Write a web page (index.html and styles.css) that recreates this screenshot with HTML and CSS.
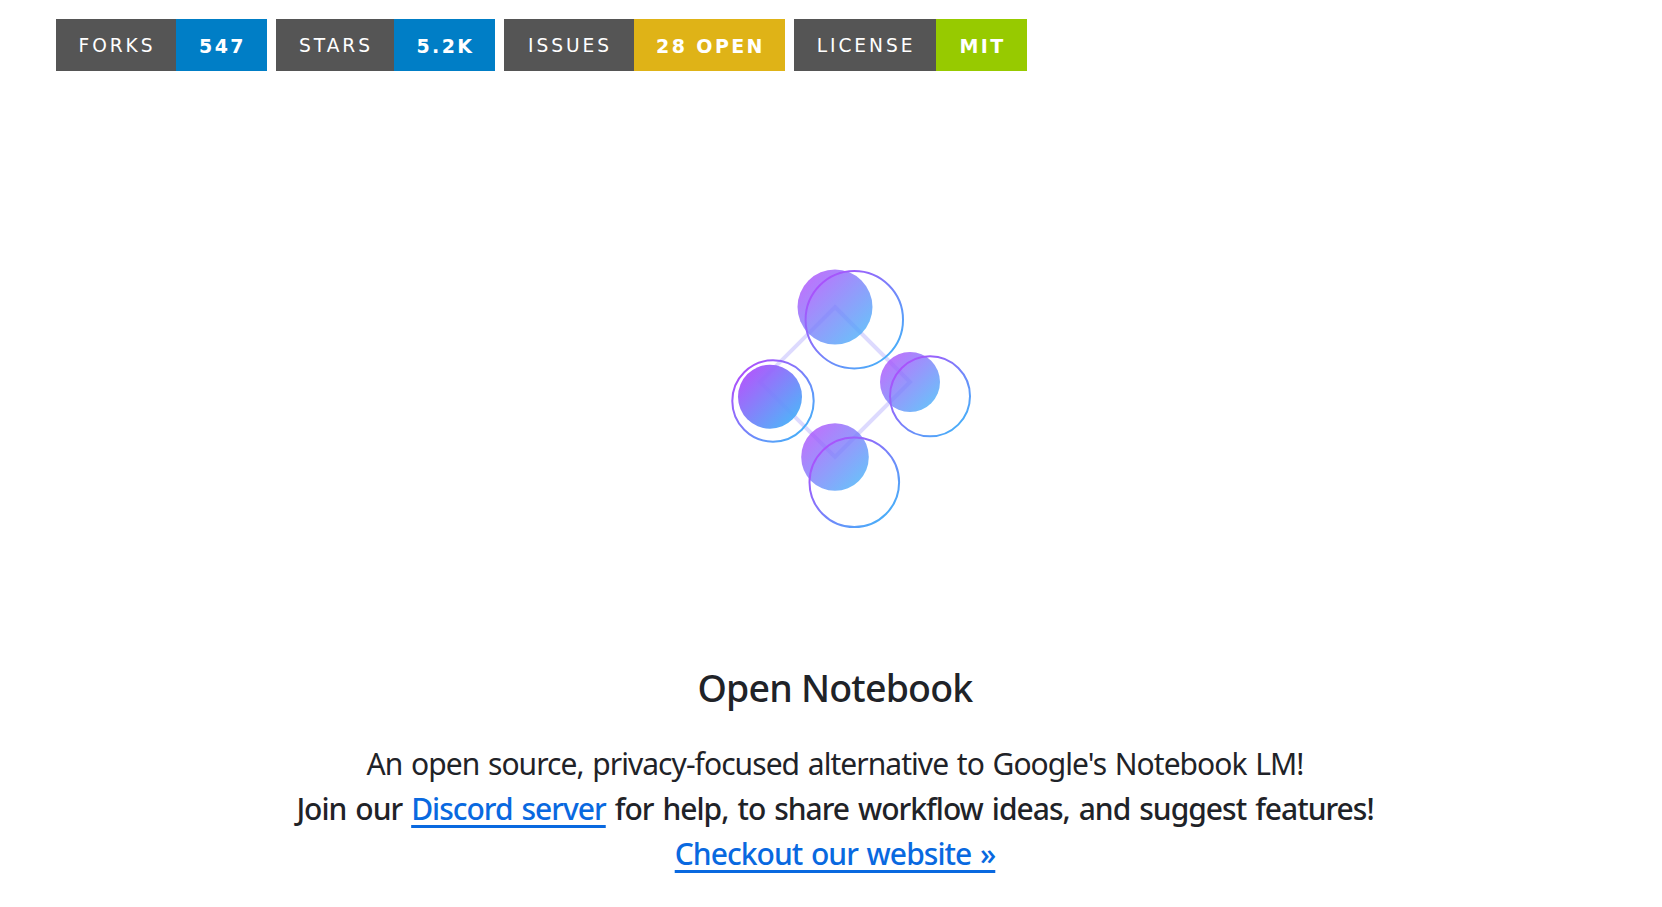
FILE: index.html
```html
<!DOCTYPE html>
<html lang="en">
<head>
<meta charset="utf-8">
<title>Open Notebook</title>
<link rel="stylesheet" href="styles.css">
</head>
<body>
<nav class="badges">
  <a class="badge forks"><span class="label">FORKS</span><span class="value blue">547</span></a>
  <a class="badge stars"><span class="label">STARS</span><span class="value blue">5.2K</span></a>
  <a class="badge issues"><span class="label">ISSUES</span><span class="value yellow">28 OPEN</span></a>
  <a class="badge license"><span class="label">LICENSE</span><span class="value green">MIT</span></a>
</nav>
<main class="hero">
  <svg class="logo" width="300" height="300" viewBox="0 0 300 300" aria-label="Open Notebook logo">
    <defs>
      <linearGradient id="g" x1="0" y1="0" x2="1" y2="1">
        <stop offset=".12" stop-color="#ac50fc"/>
        <stop offset="1" stop-color="#38bdf8"/>
      </linearGradient>
    </defs>
    <path d="M150 75 L225 150 L150 225 L75 150 Z" fill="none" stroke="#7c70fa" stroke-opacity=".26" stroke-width="4"/>
    <circle cx="150" cy="75" r="37.5" fill="url(#g)" opacity=".8"/>
    <circle cx="225" cy="150" r="30" fill="url(#g)" opacity=".8"/>
    <circle cx="150" cy="225" r="33.8" fill="url(#g)" opacity=".8"/>
    <circle cx="85" cy="164.7" r="32" fill="url(#g)" opacity=".95"/>
    <g fill="none" stroke="url(#g)" stroke-width="2">
      <circle cx="169.3" cy="87.7" r="48.7"/>
      <circle cx="245" cy="164.3" r="40"/>
      <circle cx="169.3" cy="250.3" r="44.8"/>
      <circle cx="88" cy="169" r="40.7"/>
    </g>
  </svg>
  <h1 class="title">Open Notebook</h1>
  <p class="lead">
    <span class="line">An open source, privacy-focused alternative to Google's Notebook LM!</span>
    <strong class="line join">Join our <a href="#" class="link">Discord server</a> for help, to share workflow ideas, and suggest features!</strong>
    <strong class="line"><a href="#" class="link">Checkout our website »</a></strong>
  </p>
</main>
</body>
</html>
```
FILE: styles.css
```css
html, body { margin: 0; padding: 0; background: #fff; }
body {
  height: 907px;
  overflow: hidden;
  color: #1f2328;
  font-family: "Noto Sans", "Open Sans", sans-serif;
}
.badges {
  display: flex;
  gap: 9px;
  padding: 19px 0 0 56px;
}
.badge {
  display: grid;
  height: 52px;
  color: #fff;
  font-family: "DejaVu Sans", Verdana, sans-serif;
  font-size: 18.6px;
  line-height: 50px;
  text-align: center;
}
.forks { grid-template-columns: 120px 91px; }
.stars { grid-template-columns: 118px 101px; }
.issues { grid-template-columns: 130px 151px; }
.license { grid-template-columns: 142px 91px; }
.label, .value {
  box-sizing: border-box;
  height: 52px;
  padding: 2px 0 0 2px;
}
.label {
  background: #555;
  letter-spacing: 2.95px;
}
.value {
  font-size: 19px;
  font-weight: 700;
  letter-spacing: 2.4px;
}
.blue { background: #007ec6; }
.yellow { background: #dfb317; }
.green { background: #97ca00; }
.hero {
  display: flex;
  flex-direction: column;
  align-items: center;
  margin-left: 8px;
  padding-top: 161px;
}
.logo { display: block; }
.title {
  margin: 131px 0 0;
  font-size: 37.5px;
  line-height: 50px;
  font-weight: 500;
  letter-spacing: -0.8px;
}
.lead {
  margin: 28px 0 0;
  font-size: 30px;
  line-height: 45px;
  text-align: center;
  letter-spacing: -0.95px;
  word-spacing: 1.8px;
}
.line { display: block; }
strong.line { font-weight: 500; }
.join { letter-spacing: -1px; word-spacing: 2.2px; }
.link {
  color: #0969e0;
  text-decoration: underline;
  text-decoration-thickness: 3px;
  text-underline-offset: 5px;
}
```
